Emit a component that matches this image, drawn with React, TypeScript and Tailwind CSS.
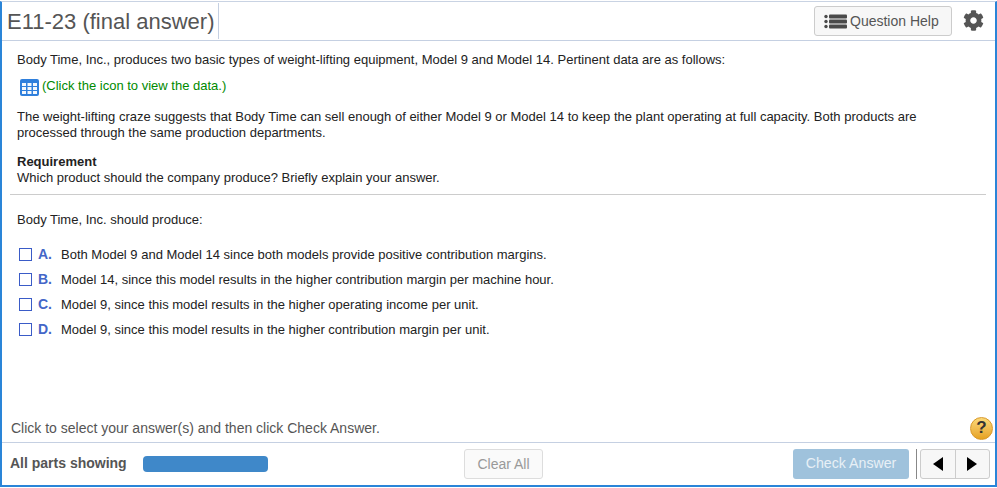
import React from "react";
import { FaCog } from "react-icons/fa";

const choices = [
  ["A.", "Both Model 9 and Model 14 since both models provide positive contribution margins."],
  ["B.", "Model 14, since this model results in the higher contribution margin per machine hour."],
  ["C.", "Model 9, since this model results in the higher operating income per unit."],
  ["D.", "Model 9, since this model results in the higher contribution margin per unit."],
];

function ListIcon() {
  return (
    <svg width="23" height="15" viewBox="0 0 23 15" className="mr-[3px]">
      <g fill="#4a4a4a">
        <circle cx="2" cy="2.5" r="1.7" />
        <circle cx="2" cy="7.5" r="1.7" />
        <circle cx="2" cy="12.5" r="1.7" />
        <rect x="5" y="0.5" width="18" height="4" rx="1" />
        <rect x="5" y="5.5" width="18" height="4" rx="1" />
        <rect x="5" y="10.5" width="18" height="4" rx="1" />
      </g>
    </svg>
  );
}

function GridIcon() {
  return (
    <svg width="19" height="17" viewBox="0 0 19 17" className="mt-[1px]">
      <rect x="0" y="0" width="19" height="17" rx="2" fill="#2f7fdc" />
      <g fill="#ffffff" opacity="0.95">
        <rect x="2" y="4" width="4" height="3" /><rect x="7.5" y="4" width="4" height="3" /><rect x="13" y="4" width="4" height="3" />
        <rect x="2" y="8" width="4" height="3" /><rect x="7.5" y="8" width="4" height="3" /><rect x="13" y="8" width="4" height="3" />
        <rect x="2" y="12" width="4" height="3" /><rect x="7.5" y="12" width="4" height="3" /><rect x="13" y="12" width="4" height="3" />
      </g>
    </svg>
  );
}

function Caret({ dir }: { dir: "left" | "right" }) {
  return (
    <svg width="10" height="14" viewBox="0 0 10 14">
      <polygon points={dir === "left" ? "10,0 10,14 0,7" : "0,0 0,14 10,7"} fill="#000" />
    </svg>
  );
}

export default function App() {
  return (
    <div className="w-[997px] h-[488px] bg-white pt-px font-['Liberation_Sans',Arial,sans-serif] text-[13px] text-[#222]">
      <div className="h-[486px] flex flex-col border-t border-t-[#c9d3e3] border-x-2 border-x-[#2a85d8] border-b-2 border-b-[#2a85d8]">
        <header className="h-[39px] shrink-0 flex items-center border-b border-[#c5d0e2] pl-[5px] pr-[11px]">
          <h1 className="text-[22px] leading-[32px] text-[#555] pr-[4px] h-[36px] flex items-center border-r border-[#c5d0e2]">
            <span className="mt-[1px]">E11-23 (final answer)</span>
          </h1>
          <div className="ml-auto flex items-center">
            <button className="w-[138px] h-[30px] flex items-center justify-start pl-[9px] pt-[1px] rounded-[3px] border border-[#ccc] bg-[#f7f7f7] text-[14px] text-[#555] mt-[-1px]">
              <ListIcon />
              Question Help
            </button>
            <FaCog className="ml-[11px] text-[#555] mt-[-2px]" size={21} />
          </div>
        </header>

        <main className="flex-1 flex flex-col min-h-0">
          <div className="pl-[15px] pr-[10px] pt-[11px]">
            <p className="leading-[16px]">
              Body Time, Inc., produces two basic types of weight-lifting equipment, Model 9 and Model 14. Pertinent data are as follows:
            </p>
            <p className="mt-[10px] ml-[3px] flex items-center h-[18px] text-[#008a00] gap-[3px]">
              <GridIcon />
              <span className="mb-[2px]">(Click the icon to view the data.)</span>
            </p>
            <p className="mt-[13px] leading-[16px] pr-[50px]">
              The weight-lifting craze suggests that Body Time can sell enough of either Model 9 or Model 14 to keep the plant operating at full capacity. Both products are processed through the same production departments.
            </p>
            <p className="mt-[13px] leading-[16px] font-bold">Requirement</p>
            <p className="leading-[16px]">Which product should the company produce? Briefly explain your answer.</p>
          </div>
          <hr className="mt-[8px] ml-[8px] mr-[9px] border-[#ccc]" />
          <div className="pl-[15px] pt-[17px]">
            <p className="leading-[16px]">Body Time, Inc. should produce:</p>
            <ul className="mt-[14px] flex flex-col">
              {choices.map(([l, t]) => (
                <li key={l} className="h-[25px] flex items-center pl-[2px]">
                  <span className="w-[13px] h-[13px] border border-[#3a5bc7] bg-white" />
                  <span className="ml-[6px] w-[23px] font-bold text-[#4466c8] text-[14px]">{l}</span>
                  <span>{t}</span>
                </li>
              ))}
            </ul>
          </div>
          <div className="mt-auto h-[28px] flex items-center justify-between pl-[9px] pr-[2px] text-[14px] text-[#555]">
            <span>Click to select your answer(s) and then click Check Answer.</span>
            <span className="w-[23px] h-[23px] rounded-full bg-gradient-to-b from-[#fbd977] to-[#e6a21c] border border-[#d9982a] flex items-center justify-center font-bold text-[17px] text-[#333]">?</span>
          </div>
        </main>

        <footer className="h-[43px] shrink-0 flex items-center border-t border-[#c5d0e2] pl-[8px] pr-[5px]">
          <span className="font-bold text-[14px] text-[#555] w-[133px] mb-[2px]">All parts showing</span>
          <div className="w-[125px] h-[16px] rounded-[4px] bg-[#3f88c9]" />
          <button className="ml-[196px] w-[79px] h-[30px] rounded-[3px] border border-[#ddd] bg-[#fafafa] text-[14px] text-[#999]">Clear All</button>
          <button className="ml-auto w-[116px] h-[30px] rounded-[3px] bg-[#9fc2dc] text-[14.2px] text-[#e8f0f6]">Check Answer</button>
          <div className="ml-[7px] w-px h-[30px] bg-[#888]" />
          <div className="ml-[3px] w-[70px] h-[30px] flex rounded-[3px] border border-[#ccc] bg-[#f7f7f7]">
            <span className="flex-1 flex items-center justify-center border-r border-[#ccc]"><Caret dir="left" /></span>
            <span className="flex-1 flex items-center justify-center"><Caret dir="right" /></span>
          </div>
        </footer>
      </div>
    </div>
  );
}
